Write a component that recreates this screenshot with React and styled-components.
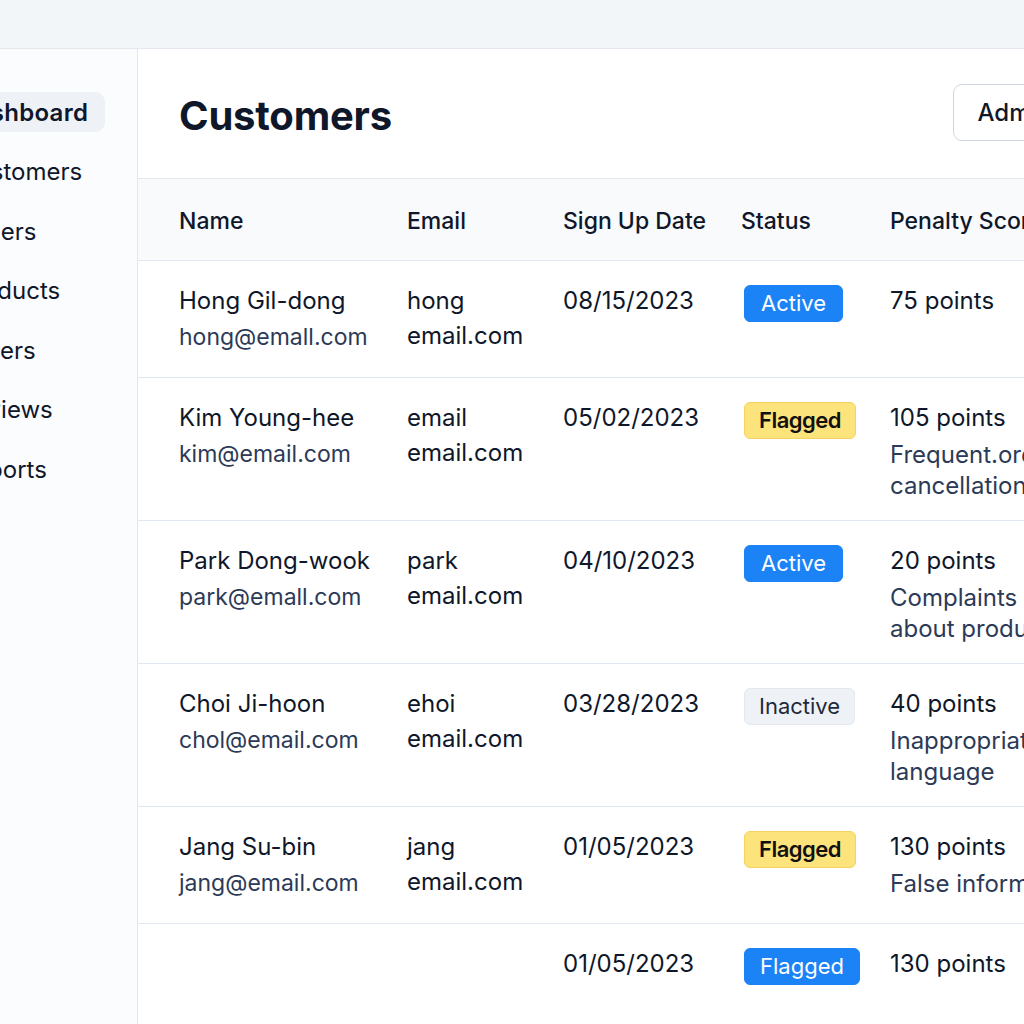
import React from "react";
import styled, { createGlobalStyle } from "styled-components";
import { ChevronDown } from "lucide-react";

const NAV = ["Dashboard", "Customers", "Orders", "Products", "Sellers", "Reviews", "Reports"];

const CUSTOMERS = [
  {
    name: "Hong Gil-dong",
    mail: "hong@emall.com",
    email: ["hong", "email.com"],
    date: "08/15/2023",
    status: "active",
    label: "Active",
    points: "75 points",
    reason: [],
  },
  {
    name: "Kim Young-hee",
    mail: "kim@email.com",
    email: ["email", "email.com"],
    date: "05/02/2023",
    status: "flagged",
    label: "Flagged",
    points: "105 points",
    reason: ["Frequent.order", "cancellations"],
  },
  {
    name: "Park Dong-wook",
    mail: "park@emall.com",
    email: ["park", "email.com"],
    date: "04/10/2023",
    status: "active",
    label: "Active",
    points: "20 points",
    reason: ["Complaints", "about product"],
  },
  {
    name: "Choi Ji-hoon",
    mail: "chol@email.com",
    email: ["ehoi", "email.com"],
    date: "03/28/2023",
    status: "inactive",
    label: "Inactive",
    points: "40 points",
    reason: ["Inappropriate", "language"],
  },
  {
    name: "Jang Su-bin",
    mail: "jang@email.com",
    email: ["jang", "email.com"],
    date: "01/05/2023",
    status: "flagged",
    label: "Flagged",
    points: "130 points",
    reason: ["False information"],
  },
  {
    name: "",
    mail: "",
    email: [],
    date: "01/05/2023",
    status: "blue",
    label: "Flagged",
    points: "130 points",
    reason: [],
  },
];

const App = () => {
  return (
    <>
      <GlobalStyle />
      <Page>
        <TopBar />
        <Body>
          <Sidebar>
            {NAV.map((item, i) => (
              <NavItem key={item} $active={i === 0}>
                {item}
              </NavItem>
            ))}
          </Sidebar>
          <Main>
            <Header>
              <Title>Customers</Title>
              <AdminButton>
                Admin
                <ChevronDown size={18} strokeWidth={2} />
              </AdminButton>
            </Header>
            <HeadRow>
              <HeadCell>Name</HeadCell>
              <HeadCell>Email</HeadCell>
              <HeadCell>Sign Up Date</HeadCell>
              <HeadCell>Status</HeadCell>
              <HeadCell>Penalty Score</HeadCell>
            </HeadRow>
            {CUSTOMERS.map((c, i) => (
              <Row key={i}>
                <Cell>
                  <Primary>{c.name}</Primary>
                  {c.mail && <Secondary>{c.mail}</Secondary>}
                </Cell>
                <Cell>
                  {c.email.map((line, j) => (
                    <EmailLine key={j} $first={j === 0}>
                      {line}
                    </EmailLine>
                  ))}
                </Cell>
                <Cell>
                  <Primary>{c.date}</Primary>
                </Cell>
                <Cell>
                  <Badge $kind={c.status}>{c.label}</Badge>
                </Cell>
                <Cell>
                  <Primary>{c.points}</Primary>
                  {c.reason.length > 0 && (
                    <Reason>
                      {c.reason.map((line) => (
                        <div key={line}>{line}</div>
                      ))}
                    </Reason>
                  )}
                </Cell>
              </Row>
            ))}
          </Main>
        </Body>
      </Page>
    </>
  );
};
export default App;

const GlobalStyle = createGlobalStyle`
  html, body {
    margin: 0;
    padding: 0;
    overflow: hidden;
    background: #ffffff;
  }
  body {
    font-family: Inter, "Noto Sans", "Liberation Sans", sans-serif;
    color: #0f172a;
  }
  * {
    box-sizing: border-box;
  }
`;

const Page = styled.div`
  width: 1209px;
  height: 1024px;
  margin-left: -70px;
  display: flex;
  flex-direction: column;
  overflow: hidden;
`;

const TopBar = styled.header`
  height: 49px;
  flex-shrink: 0;
  background: #f3f6f9;
  border-bottom: 1px solid #e3e8ee;
`;

const Body = styled.div`
  flex: 1;
  display: flex;
  min-height: 0;
`;

const Sidebar = styled.nav`
  width: 208px;
  flex-shrink: 0;
  background: #fbfcfd;
  border-right: 1px solid #e3e8ee;
  padding: 43px 32px 0 13px;
  display: flex;
  flex-direction: column;
  gap: 19.5px;
`;

const NavItem = styled.div`
  height: 40px;
  flex-shrink: 0;
  display: flex;
  align-items: center;
  padding-left: 16px;
  border-radius: 10px;
  font-size: 24px;
  font-weight: ${(p) => (p.$active ? 600 : 400)};
  letter-spacing: ${(p) => (p.$active ? "0.3px" : "0")};
  color: #0f172a;
  white-space: nowrap;
  background: ${(p) => (p.$active ? "#eef2f7" : "transparent")};
`;

const Main = styled.main`
  flex: 1;
  background: #ffffff;
  display: flex;
  flex-direction: column;
`;

const Header = styled.div`
  height: 130px;
  flex-shrink: 0;
  padding: 0 41px;
  display: flex;
  align-items: center;
  justify-content: space-between;
  border-bottom: 1px solid #e2e8f0;
`;

const Title = styled.h1`
  margin: 4px 0 0;
  font-size: 40px;
  font-weight: 700;
  letter-spacing: -0.2px;
  color: #0f172a;
`;

const AdminButton = styled.button`
  height: 57px;
  display: flex;
  align-items: center;
  gap: 8px;
  padding: 0 20px 0 24px;
  margin-top: -3px;
  border: 1px solid #cfd6df;
  border-radius: 9px;
  background: #ffffff;
  font-family: inherit;
  font-size: 24px;
  font-weight: 500;
  color: #0f172a;
`;

const GridRow = styled.div`
  flex-shrink: 0;
  display: grid;
  grid-template-columns: 228px 156px 178px 149px 1fr;
  padding-left: 41px;
  border-bottom: 1px solid #e2e8f0;
`;

const HeadRow = styled(GridRow)`
  height: 82px;
  align-items: center;
  background: #f8fafc;
`;

const HeadCell = styled.div`
  font-size: 23px;
  font-weight: 500;
  color: #0f172a;
  white-space: nowrap;
  padding-top: 2px;
`;

const Row = styled(GridRow)`
  min-height: 117px;
  padding-top: 27px;
  padding-bottom: 19px;
  background: #ffffff;
`;

const Cell = styled.div`
  font-size: 24px;
  white-space: nowrap;
`;

const Primary = styled.div`
  line-height: 26px;
  color: #0f172a;
`;

const Secondary = styled.div`
  margin-top: 8px;
  font-size: 23px;
  line-height: 31px;
  color: #2c3a57;
`;

const EmailLine = styled.div`
  margin-top: ${(p) => (p.$first ? "0" : "6px")};
  line-height: ${(p) => (p.$first ? "26px" : "31px")};
  color: #0f172a;
`;

const Reason = styled.div`
  margin-top: 8px;
  font-size: 24px;
  line-height: 31px;
  color: #2c3a57;
`;

const BADGES = {
  active: { bg: "#1b83f6", border: "#1b83f6", color: "#ffffff", weight: 400, spacing: "0", pad: "16px" },
  blue: { bg: "#1b83f6", border: "#1b83f6", color: "#ffffff", weight: 400, spacing: "0", pad: "15px" },
  flagged: { bg: "#fde37c", border: "#f6d35f", color: "#111111", weight: 600, spacing: "-0.5px", pad: "14px" },
  inactive: { bg: "#eef2f6", border: "#e3e8ee", color: "#1e293b", weight: 400, spacing: "0", pad: "14px" },
};

const Badge = styled.span`
  display: inline-flex;
  align-items: center;
  height: 37px;
  margin: -4px 0 0 3px;
  padding: 0 ${(p) => BADGES[p.$kind].pad};
  border-radius: 6px;
  border: 1px solid ${(p) => BADGES[p.$kind].border};
  background: ${(p) => BADGES[p.$kind].bg};
  color: ${(p) => BADGES[p.$kind].color};
  font-weight: ${(p) => BADGES[p.$kind].weight};
  letter-spacing: ${(p) => BADGES[p.$kind].spacing};
  font-size: 22px;
  line-height: 1;
`;
